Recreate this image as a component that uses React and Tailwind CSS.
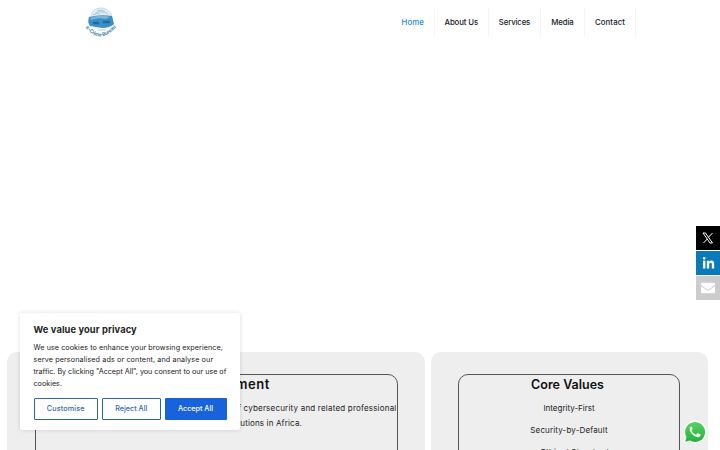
import { FaLinkedinIn, FaEnvelope } from "react-icons/fa";

const links = [
  { name: "Home", cls: "w-[33px] justify-start text-[#1a87cf]", text: "tracking-[0.1px]" },
  { name: "About Us", cls: "w-[54.5px] justify-center", text: "-tracking-[0.12px]" },
  { name: "Services", cls: "w-[52px] justify-center", text: "-tracking-[0.15px]" },
  { name: "Media", cls: "w-[44px] justify-center", text: "-tracking-[0.1px]" },
  { name: "Contact", cls: "w-[51px] justify-center", text: "tracking-[0.1px]" },
];

function Logo(){
  return (
    <svg className="h-[34px] w-[34px]" viewBox="0 0 34 34">
      <path d="M7 11C7 5 12 2 17 2s10 3 11 9" fill="#e3eff5" stroke="#b5d0de" strokeWidth="0.7" />
      <path d="M11 7q6-3 13 1M13 4.500q5-1 8 1M9 9q4-2 7-1" fill="none" stroke="#8fb8ce" strokeWidth="0.7" />
      <path d="M5 11q12-3 23-1l2 8q-4 4-12 4L6 20q-3-4-1-9z" fill="#3b8fc6" />
      <path d="M6 12q10-4 20-1l-4 2q-8-2-15 1z" fill="#7db6d8" />
      <path d="M9 17h6M19 16h7" stroke="#1e6ca5" strokeWidth="2.5" />
      <path d="M12 22q6 2 12 0l-3 3h-6z" fill="#d3e5ee" />
      <path id="arc" d="M1.500 21.500Q16 40 33 20" fill="none" />
      <text fill="#4384a8" fontSize="5" fontWeight="700" fontFamily="Inter, sans-serif">
        <textPath href="#arc" textLength="37">e-Crime Bureau</textPath>
      </text>
    </svg>
  )
}

function XLogo(){
  return (
    <svg className="h-[12px] w-[12px]" viewBox="0 0 24 24" fill="none" stroke="white">
      <path d="M2 2h5l14 20h-5z" strokeWidth="2" />
      <path d="M21 2l-8.5 9M10.500 14L3 22" strokeWidth="2" />
    </svg>
  )
}

function WhatsApp(){
  return (
    <svg className="h-[24px] w-[24px]" viewBox="0 0 24 24">
      <defs>
        <linearGradient id="wa" x1="0" y1="0" x2="0" y2="1">
          <stop offset="0" stopColor="#57d163" />
          <stop offset="1" stopColor="#23b33a" />
        </linearGradient>
      </defs>
      <path d="M.7 23.3l1.6-5.8A11.3 11.3 0 1 1 6.700 21.800z" fill="#fff" />
      <path d="M2.200 21.800l1.300-4.700A10 10 0 1 1 7 20.600z" fill="url(#wa)" />
      <path d="M8.500 6.500c-.6 0-2 1-1.800 2.800.3 3.400 4.200 7.400 7.900 7.900 1.700.2 3-1 3.100-2.100 0-.4 0-.6-.3-.8l-2.300-1.100c-.4-.2-.6 0-.8.3l-.8 1c-.3.3-.5.3-.8.1-1.800-.8-3.100-2-4-3.700-.2-.4 0-.5.2-.8l.6-.8c.2-.2.1-.5 0-.8l-.8-1.900z" fill="#fff" />
    </svg>
  )
}

export default function App(){
  return (
    <div className="relative h-[450px] w-[720px] overflow-hidden bg-white font-['Inter','Open_Sans',sans-serif] text-[#222]">
      <header className="flex h-[352.400px] items-start pl-[84px]">
        <div className="mt-[6px] w-[317.500px]"><Logo /></div>
        <nav className="mt-[8px] flex h-[29px] text-[7.8px] font-medium text-[#16162a]">
          {links.map((l) => (
            <a key={l.name} className={"flex items-center border-r border-[#f5f5f5] whitespace-nowrap " + l.cls}>
              <span className={l.text}>{l.name}</span>
            </a>
          ))}
        </nav>
      </header>

      <main className="flex h-[110px] gap-[6px] pl-[7px]">
        <section className="w-[418px] rounded-[10px] bg-[#eee] pt-[22px] pr-[27px] pl-[28px]">
          <div className="h-[100px] rounded-t-[10px] border border-[#555] text-right">
            <h2 className="mt-[1px] mr-[127px] text-[13px] leading-[17px] font-semibold tracking-[0.6px] text-[#111]">Statement</h2>
            <p className="mt-[7.500px] mr-[0.500px] text-[8px] leading-[15px] tracking-[0.2px] whitespace-nowrap">of cybersecurity and related professional</p>
            <p className="mr-[95px] text-[8px] leading-[15px] tracking-[0.15px]">solutions in Africa.</p>
          </div>
        </section>
        <section className="w-[277px] rounded-[10px] bg-[#eee] pt-[22px] pr-[28px] pl-[27px]">
          <div className="h-[100px] rounded-t-[10px] border border-[#555] text-center">
            <h2 className="mt-[1px] mr-[3px] text-[12.5px] leading-[17px] font-semibold text-[#111]">Core Values</h2>
            <p className="mt-[7.500px] text-[8px] leading-[15px]">Integrity-First</p>
            <p className="mt-[7.500px] text-[8px] leading-[15px] tracking-[0.15px]">Security-by-Default</p>
            <p className="mt-[6.500px] pl-4 text-[8px] leading-[15px] tracking-[0.4px]">Ethical Standards</p>
          </div>
        </section>
      </main>

      <aside className="absolute top-[226px] right-0 flex w-[24px] flex-col gap-[1px] text-white">
        <a className="flex h-[24px] items-center justify-center bg-black"><XLogo /></a>
        <a className="flex h-[24px] items-center justify-center bg-[#0a7bb8]"><FaLinkedinIn className="text-[13px]" /></a>
        <a className="flex h-[24px] items-center justify-center bg-[#ccc]"><FaEnvelope className="text-[14px]" /></a>
      </aside>

      <div className="absolute top-[313px] left-[20px] h-[117px] w-[220px] rounded-[2px] bg-white px-[13.500px] pt-[10px] shadow-[0_0_4px_rgba(0,0,0,0.15)]">
        <h3 className="text-[9.3px] leading-[13px] font-bold tracking-[0.12px]">We value your privacy</h3>
        <div className="mt-[6px] text-[7.2px] leading-[12px] whitespace-nowrap">
          <p className="tracking-[0.07px]">We use cookies to enhance your browsing experience,</p>
          <p className="tracking-[0.12px]">serve personalised ads or content, and analyse our</p>
          <p className="tracking-[-0.02px]">traffic. By clicking "Accept All", you consent to our use of</p>
          <p>cookies.</p>
        </div>
        <div className="mt-[8px] flex gap-[4px] text-[7.2px] font-medium text-[#2f65b0]">
          <button className="h-[22px] w-[64.500px] rounded-[1px] border border-[#2c64b4] tracking-[0.15px]">Customise</button>
          <button className="h-[22px] w-[58.500px] rounded-[1px] border border-[#2c64b4]">Reject All</button>
          <button className="h-[22px] w-[62px] rounded-[1px] bg-[#1863dc] text-white">Accept All</button>
        </div>
      </div>

      <div className="absolute top-[420px] left-[683px]"><WhatsApp /></div>
    </div>
  )
}
